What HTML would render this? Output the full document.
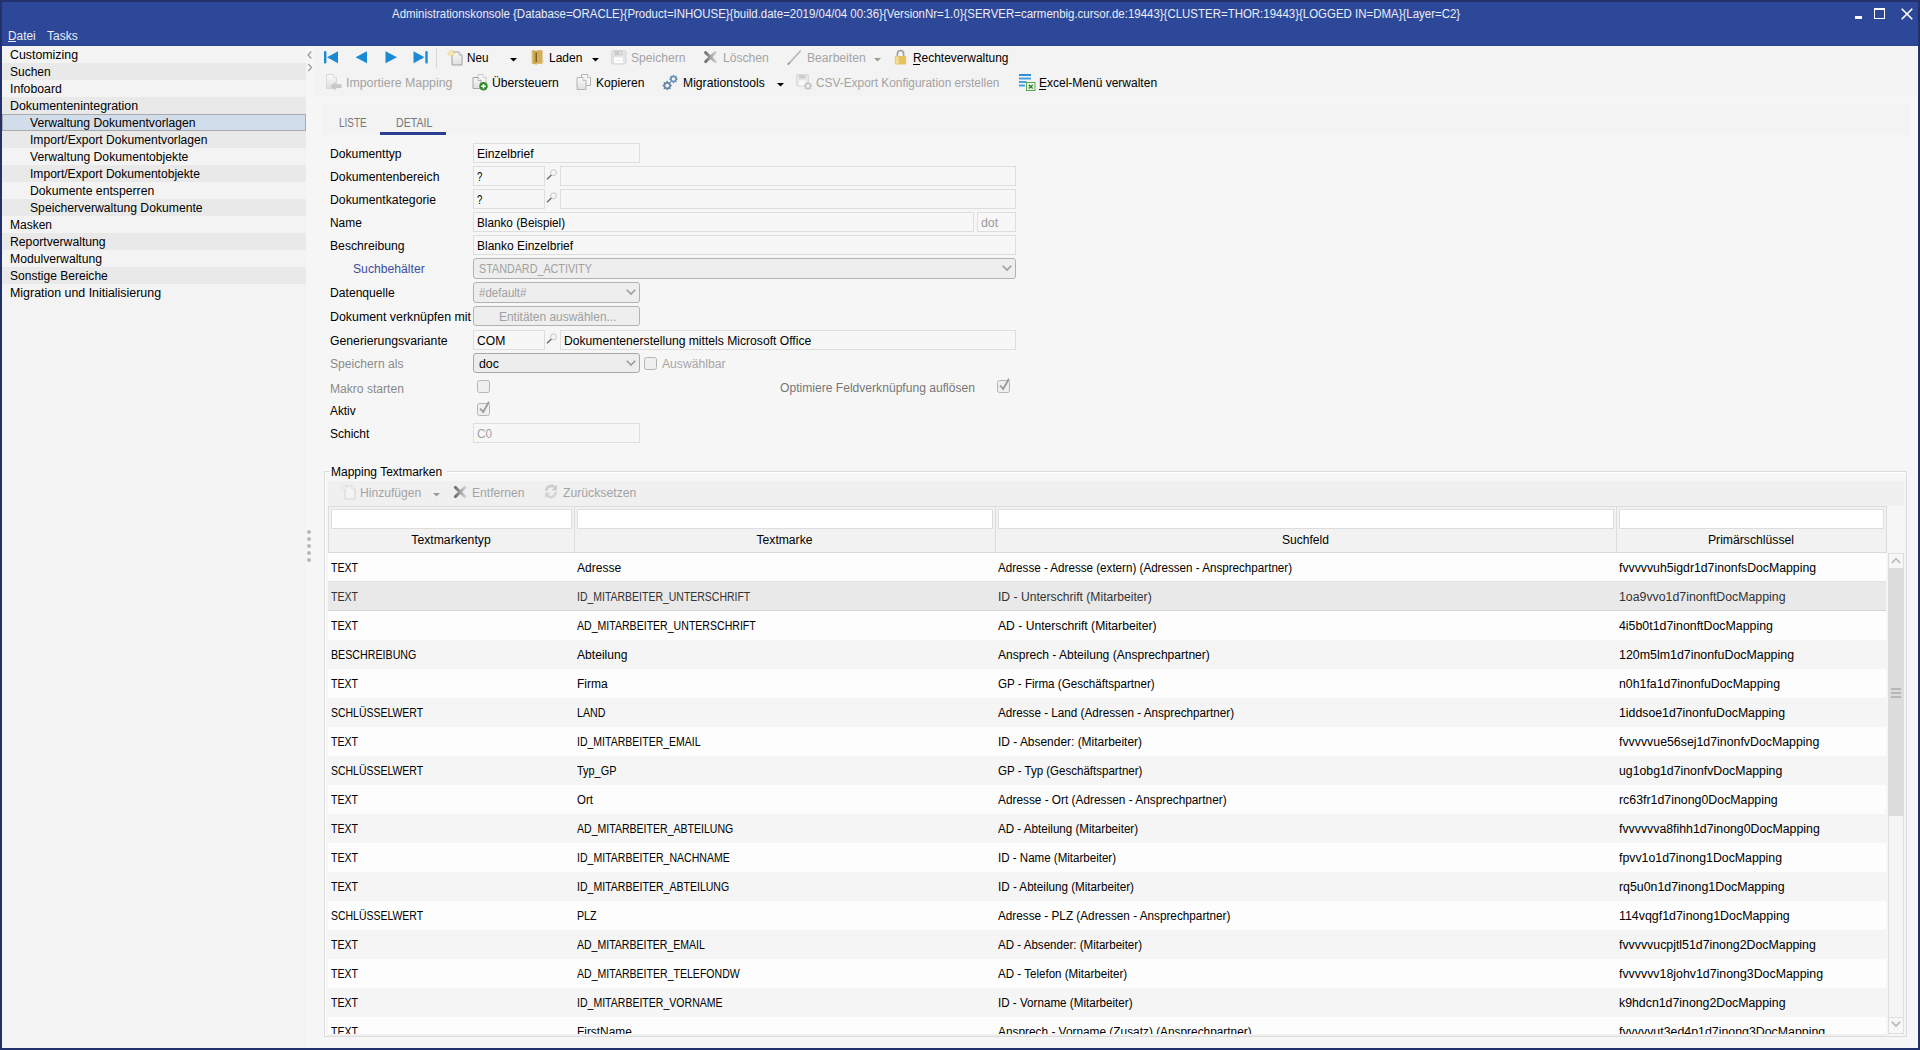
<!DOCTYPE html><html><head><meta charset="utf-8"><title>Administrationskonsole</title><style>
*{margin:0;padding:0;box-sizing:border-box}
html,body{width:1920px;height:1050px;overflow:hidden;background:#23316b}
body{position:relative;font-family:"Liberation Sans",sans-serif;font-size:12px;color:#000}
.a{position:absolute}
.t{position:absolute;white-space:nowrap;font-size:12px;line-height:17px}
.dis{color:#a3a3a3}
svg{position:absolute;overflow:visible}
</style></head><body>
<div class="a" style="left:2px;top:2px;width:1916px;height:44px;background:#2e4899"></div>
<div class="a" style="left:2px;top:45px;width:1916px;height:1px;background:#2a4394"></div>
<div class="t" style="left:392px;top:6px;color:#e9edf7;transform:scaleX(0.955);transform-origin:0 0;">Administrationskonsole {Database=ORACLE}{Product=INHOUSE}{build.date=2019/04/04 00:36}{VersionNr=1.0}{SERVER=carmenbig.cursor.de:19443}{CLUSTER=THOR:19443}{LOGGED IN=DMA}{Layer=C2}</div>
<div class="a" style="left:1855px;top:16px;width:7px;height:3px;background:#fff"></div>
<div class="a" style="left:1874px;top:8px;width:11px;height:11px;border:1.5px solid #fff;border-top-width:2px"></div>
<svg style="left:1901px;top:8px" width="12" height="12"><path d="M0.7 0.7L11.3 11.3M11.3 0.7L0.7 11.3" stroke="#fff" stroke-width="1.6"/></svg>
<div class="t" style="left:8px;top:28px;color:#e9edf7;transform:scaleX(0.987);transform-origin:0 0;">Datei</div>
<div class="a" style="left:8px;top:41px;width:8px;height:1px;background:#e9edf7"></div>
<div class="t" style="left:47px;top:28px;color:#e9edf7;">Tasks</div>
<div class="a" style="left:2px;top:46px;width:1916px;height:1002px;background:#f6f6f6"></div>
<div class="a" style="left:2px;top:46px;width:304px;height:1002px;background:#f3f3f3"></div>
<div class="t" style="left:10px;top:47px;color:#000;transform:scaleX(1.030);transform-origin:0 0;">Customizing</div>
<div class="a" style="left:2px;top:63px;width:304px;height:17px;background:#e9e9e9"></div>
<div class="t" style="left:10px;top:64px;color:#000;">Suchen</div>
<div class="t" style="left:10px;top:81px;color:#000;transform:scaleX(1.021);transform-origin:0 0;">Infoboard</div>
<div class="a" style="left:2px;top:97px;width:304px;height:17px;background:#e9e9e9"></div>
<div class="t" style="left:10px;top:98px;color:#000;transform:scaleX(1.032);transform-origin:0 0;">Dokumentenintegration</div>
<div class="a" style="left:2px;top:114px;width:304px;height:17px;background:#d2ddec;border:1px solid #ababab"></div>
<div class="t" style="left:30px;top:115px;color:#000;transform:scaleX(1.012);transform-origin:0 0;">Verwaltung Dokumentvorlagen</div>
<div class="a" style="left:2px;top:131px;width:304px;height:17px;background:#e9e9e9"></div>
<div class="t" style="left:30px;top:132px;color:#000;transform:scaleX(1.008);transform-origin:0 0;">Import/Export Dokumentvorlagen</div>
<div class="t" style="left:30px;top:149px;color:#000;transform:scaleX(1.014);transform-origin:0 0;">Verwaltung Dokumentobjekte</div>
<div class="a" style="left:2px;top:165px;width:304px;height:17px;background:#e9e9e9"></div>
<div class="t" style="left:30px;top:166px;color:#000;transform:scaleX(1.007);transform-origin:0 0;">Import/Export Dokumentobjekte</div>
<div class="t" style="left:30px;top:183px;color:#000;transform:scaleX(1.018);transform-origin:0 0;">Dokumente entsperren</div>
<div class="a" style="left:2px;top:199px;width:304px;height:17px;background:#e9e9e9"></div>
<div class="t" style="left:30px;top:200px;color:#000;transform:scaleX(1.015);transform-origin:0 0;">Speicherverwaltung Dokumente</div>
<div class="t" style="left:10px;top:217px;color:#000;">Masken</div>
<div class="a" style="left:2px;top:233px;width:304px;height:17px;background:#e9e9e9"></div>
<div class="t" style="left:10px;top:234px;color:#000;transform:scaleX(1.017);transform-origin:0 0;">Reportverwaltung</div>
<div class="t" style="left:10px;top:251px;color:#000;transform:scaleX(1.015);transform-origin:0 0;">Modulverwaltung</div>
<div class="a" style="left:2px;top:267px;width:304px;height:17px;background:#e9e9e9"></div>
<div class="t" style="left:10px;top:268px;color:#000;transform:scaleX(1.004);transform-origin:0 0;">Sonstige Bereiche</div>
<div class="t" style="left:10px;top:285px;color:#000;transform:scaleX(1.034);transform-origin:0 0;">Migration und Initialisierung</div>
<svg style="left:306.5px;top:51px" width="6" height="22"><path d="M4.3 0.5L1 4L4.3 7.5M1.3 13L4.6 16.5L1.3 20" fill="none" stroke="#9a9a9a" stroke-width="1.2"/></svg>
<div class="a" style="left:307px;top:530px;width:4px;height:4px;background:#b7b7b7;border-radius:2px"></div>
<div class="a" style="left:307px;top:537px;width:4px;height:4px;background:#b7b7b7;border-radius:2px"></div>
<div class="a" style="left:307px;top:544px;width:4px;height:4px;background:#b7b7b7;border-radius:2px"></div>
<div class="a" style="left:307px;top:551px;width:4px;height:4px;background:#b7b7b7;border-radius:2px"></div>
<div class="a" style="left:307px;top:558px;width:4px;height:4px;background:#b7b7b7;border-radius:2px"></div>
<div class="a" style="left:314px;top:46px;width:1603px;height:50px;background:#f3f3f3"></div>
<div class="a" style="left:1917px;top:46px;width:1px;height:1001px;background:#fdfdfd"></div>
<svg style="left:324px;top:51px" width="15" height="13" viewBox="0 0 15 13"><rect x="0" y="0" width="2.4" height="12.5" rx="1" fill="#1a8ad4"/><path d="M14 0.3V12.3L3 6.3Z" fill="#1a8ad4"/></svg>
<svg style="left:355px;top:51px" width="13" height="13" viewBox="0 0 13 13"><path d="M12 0.3V12.3L0.5 6.3Z" fill="#1a8ad4"/></svg>
<svg style="left:385px;top:51px" width="13" height="13" viewBox="0 0 13 13"><path d="M0.5 0.3V12.3L12 6.3Z" fill="#1a8ad4"/></svg>
<svg style="left:413px;top:51px" width="15" height="13" viewBox="0 0 15 13"><path d="M0.5 0.3V12.3L11.5 6.3Z" fill="#1a8ad4"/><rect x="12.3" y="0" width="2.4" height="12.5" rx="1" fill="#1a8ad4"/></svg>
<div class="a" style="left:436px;top:48px;width:1px;height:20px;background:#d6d6d6"></div>
<svg style="left:0;top:0" width="0" height="0"><defs><linearGradient id="dg" x1="0" y1="0" x2="0" y2="1"><stop offset="0" stop-color="#fafafa"/><stop offset="1" stop-color="#dedede"/></linearGradient><linearGradient id="xg" x1="0" y1="0" x2="1" y2="0"><stop offset="0" stop-color="#6f6f6f"/><stop offset="1" stop-color="#cfcfcf"/></linearGradient><linearGradient id="fg" x1="0" y1="0" x2="1" y2="0"><stop offset="0" stop-color="#f0d592"/><stop offset="0.4" stop-color="#c9a24c"/><stop offset="1" stop-color="#d8b660"/></linearGradient></defs></svg>
<svg style="left:447px;top:49px" width="17" height="17" viewBox="0 0 17 17"><path d="M5.0 3.0H12.0L15.0 6.0V16.0H5.0Z" fill="url(#dg)" stroke="#a0a0a0" stroke-width="1"/><path d="M12.0 3.0V6.0H15.0" fill="#fff" stroke="#a0a0a0" stroke-width="0.8"/><circle cx="4.3" cy="4.3" r="2.4" fill="#f3dc7a"/><circle cx="4.3" cy="4.3" r="1.3" fill="#fff3c0"/><path d="M4.3 0.3V1.6M4.3 7V8.3M0.3 4.3H1.6M7 4.3H8.3M1.5 1.5L2.4 2.4M6.2 6.2L7.1 7.1M7.1 1.5L6.2 2.4M2.4 6.2L1.5 7.1" stroke="#e6c860" stroke-width="0.9"/></svg>
<div class="t" style="left:467px;top:50px;transform:scaleX(0.975);transform-origin:0 0;">Neu</div>
<svg style="left:510px;top:58px" width="7" height="4" viewBox="0 0 7 4"><path d="M0 0H7L3.5 3.5Z" fill="#000"/></svg>
<svg style="left:531px;top:49px" width="13" height="17" viewBox="0 0 13 17"><path d="M0.5 1L6 1.8V15.8L0.5 14.6Z" fill="url(#fg)"/><path d="M6 1.2H11.5V14.2L11 14.8H6Z" fill="#d3ae58"/><path d="M5.2 3.5V13" stroke="#5a4418" stroke-width="1.1"/><path d="M11.5 9.5H12.5V13.5H11.5" fill="#e8d49a"/></svg>
<div class="t" style="left:549px;top:50px;">Laden</div>
<svg style="left:592px;top:58px" width="7" height="4" viewBox="0 0 7 4"><path d="M0 0H7L3.5 3.5Z" fill="#000"/></svg>
<svg style="left:611px;top:50px" width="16" height="15" viewBox="0 0 16 15"><rect x="0.5" y="0.5" width="14.5" height="13.5" rx="1.8" fill="#e4e4e4" stroke="#d6d6d6"/><rect x="3.5" y="1" width="8" height="4.3" fill="#cbcbcb"/><rect x="8.8" y="1.6" width="1.2" height="2.8" fill="#f0f0f0"/><rect x="3.3" y="7.3" width="8.5" height="5.8" fill="#ffffff"/><path d="M4.5 10.5H10.5" stroke="#e6e6e6" stroke-width="0.8"/></svg>
<div class="t dis" style="left:631px;top:50px;transform:scaleX(1.009);transform-origin:0 0;">Speichern</div>
<svg style="left:703px;top:50px" width="15" height="15" viewBox="0 0 15 15"><path d="M2.6 2.6L12.3 11.6M12.3 2.6L2.6 11.6" stroke="url(#xg)" stroke-width="2.9" stroke-linecap="round"/></svg>
<div class="t dis" style="left:723px;top:50px;transform:scaleX(1.010);transform-origin:0 0;">Löschen</div>
<svg style="left:787px;top:50px" width="15" height="16" viewBox="0 0 15 16"><path d="M1.2 14.2L13.2 1.2" stroke="#b4b4b4" stroke-width="1.6" stroke-linecap="round"/><path d="M1 14.5L2.6 12.6" stroke="#8a8a8a" stroke-width="1.2"/></svg>
<div class="t dis" style="left:807px;top:50px;transform:scaleX(1.011);transform-origin:0 0;">Bearbeiten</div>
<svg style="left:874px;top:58px" width="7" height="4" viewBox="0 0 7 4"><path d="M0 0H7L3.5 3.5Z" fill="#9a9a9a"/></svg>
<svg style="left:894px;top:49px" width="13" height="16" viewBox="0 0 13 16"><path d="M3.4 7.2V4.6A3.1 3.1 0 0 1 9.6 4.6V7.2" fill="none" stroke="#9c9c9c" stroke-width="1.6"/><rect x="0.8" y="7" width="11.4" height="8.4" rx="1.2" fill="#e4c35e"/><rect x="1.6" y="7.6" width="3.2" height="7.2" fill="#f1dc95"/></svg>
<div class="t" style="left:913px;top:50px;transform:scaleX(0.994);transform-origin:0 0;">Rechteverwaltung</div>
<div class="a" style="left:913px;top:64px;width:7px;height:1px;background:#000"></div>
<svg style="left:325px;top:74px" width="17" height="17" viewBox="0 0 17 17"><path d="M1.5 0.5H8.5L11.5 3.5V14.5H1.5Z" fill="url(#dg)" stroke="#d8d8d8" stroke-width="1"/><path d="M8.5 0.5V3.5H11.5" fill="#fff" stroke="#d8d8d8" stroke-width="0.8"/><path d="M16.5 10.3H10.6V7.8L5 12.2L10.6 16.6V14.1H16.5Z" fill="#c8c8c8"/></svg>
<div class="t dis" style="left:346px;top:75px;transform:scaleX(1.030);transform-origin:0 0;">Importiere Mapping</div>
<svg style="left:472px;top:74px" width="17" height="17" viewBox="0 0 17 17"><path d="M6.0 0.5H11.0L14.0 3.5V10.5H6.0Z" fill="#f6f6f6" stroke="#c8c8c8" stroke-width="1"/><path d="M11.0 0.5V3.5H14.0" fill="#fff" stroke="#c8c8c8" stroke-width="0.8"/><path d="M1.0 3.5H6.0L9.0 6.5V14.5H1.0Z" fill="url(#dg)" stroke="#a4a4a4" stroke-width="1"/><path d="M6.0 3.5V6.5H9.0" fill="#fff" stroke="#a4a4a4" stroke-width="0.8"/><circle cx="11.5" cy="12.3" r="4.2" fill="#2f8a26"/><path d="M11.5 10V14.6M9.2 12.3H13.8" stroke="#fff" stroke-width="1.5"/></svg>
<div class="t" style="left:492px;top:75px;transform:scaleX(1.012);transform-origin:0 0;">Übersteuern</div>
<svg style="left:576px;top:74px" width="16" height="17" viewBox="0 0 16 17"><path d="M5.5 0.5H11.5L14.5 3.5V11.5H5.5Z" fill="#f6f6f6" stroke="#b4b4b4" stroke-width="1"/><path d="M11.5 0.5V3.5H14.5" fill="#fff" stroke="#b4b4b4" stroke-width="0.8"/><path d="M1.0 3.5H7.0L10.0 6.5V15.5H1.0Z" fill="url(#dg)" stroke="#b4b4b4" stroke-width="1"/><path d="M7.0 3.5V6.5H10.0" fill="#fff" stroke="#b4b4b4" stroke-width="0.8"/></svg>
<div class="t" style="left:596px;top:75px;transform:scaleX(1.007);transform-origin:0 0;">Kopieren</div>
<svg style="left:662px;top:74px" width="17" height="17" viewBox="0 0 17 17"><path d="M16.10 5.00 L14.56 6.27 L14.75 8.25 L12.77 8.06 L11.50 9.60 L10.23 8.06 L8.25 8.25 L8.44 6.27 L6.90 5.00 L8.44 3.73 L8.25 1.75 L10.23 1.94 L11.50 0.40 L12.77 1.94 L14.75 1.75 L14.56 3.73Z" fill="#6a8fbf"/><circle cx="11.5" cy="5" r="1.75" fill="#f3f3f3"/><path d="M10.20 11.60 L8.53 12.98 L8.74 15.14 L6.58 14.93 L5.20 16.60 L3.82 14.93 L1.66 15.14 L1.87 12.98 L0.20 11.60 L1.87 10.22 L1.66 8.06 L3.82 8.27 L5.20 6.60 L6.58 8.27 L8.74 8.06 L8.53 10.22Z" fill="#6b87a8"/><circle cx="5.2" cy="11.6" r="1.90" fill="#f3f3f3"/></svg>
<div class="t" style="left:683px;top:75px;transform:scaleX(1.013);transform-origin:0 0;">Migrationstools</div>
<svg style="left:777px;top:83px" width="7" height="4" viewBox="0 0 7 4"><path d="M0 0H7L3.5 3.5Z" fill="#000"/></svg>
<svg style="left:796px;top:74px" width="17" height="17" viewBox="0 0 17 17"><rect x="0.5" y="0.5" width="12" height="11.5" rx="1.5" fill="#e6e6e6" stroke="#d8d8d8"/><rect x="3" y="1" width="6.5" height="3.6" fill="#cdcdcd"/><rect x="3" y="6.5" width="7" height="5" fill="#fafafa"/><path d="M16.60 12.00 L15.06 13.27 L15.25 15.25 L13.27 15.06 L12.00 16.60 L10.73 15.06 L8.75 15.25 L8.94 13.27 L7.40 12.00 L8.94 10.73 L8.75 8.75 L10.73 8.94 L12.00 7.40 L13.27 8.94 L15.25 8.75 L15.06 10.73Z" fill="#c7c7c7"/><circle cx="12" cy="12" r="1.75" fill="#f3f3f3"/></svg>
<div class="t dis" style="left:816px;top:75px;transform:scaleX(0.989);transform-origin:0 0;">CSV-Export Konfiguration erstellen</div>
<svg style="left:1019px;top:74px" width="17" height="17" viewBox="0 0 17 17"><rect x="0" y="0" width="12" height="2" fill="#2f8fd6"/><rect x="0" y="3.5" width="12" height="2" fill="#49a0de"/><rect x="0" y="7" width="7.5" height="2" fill="#49a0de"/><rect x="0" y="10.5" width="6" height="2" fill="#49a0de"/><rect x="7.5" y="8.5" width="8.5" height="8" fill="#eaf5e4" stroke="#5aa84e"/><path d="M9.8 10.8L13.7 14.4M13.7 10.8L9.8 14.4" stroke="#2f7d2a" stroke-width="1.3"/></svg>
<div class="t" style="left:1039px;top:75px;">Excel-Menü verwalten</div>
<div class="a" style="left:1039px;top:89px;width:7px;height:1px;background:#000"></div>
<div class="a" style="left:322px;top:104px;width:1588px;height:31px;background:#f3f3f3"></div>
<div class="t" style="left:339px;top:115px;color:#777777;transform:scaleX(0.831);transform-origin:0 0;">LISTE</div>
<div class="t" style="left:396px;top:115px;color:#777777;transform:scaleX(0.885);transform-origin:0 0;">DETAIL</div>
<div class="a" style="left:380px;top:132px;width:66px;height:3px;background:#2a3f94"></div>
<div class="t" style="left:330px;top:146px;color:#000;transform:scaleX(1.013);transform-origin:0 0;">Dokumenttyp</div>
<div class="t" style="left:330px;top:169px;color:#000;transform:scaleX(1.019);transform-origin:0 0;">Dokumentenbereich</div>
<div class="t" style="left:330px;top:192px;color:#000;transform:scaleX(1.019);transform-origin:0 0;">Dokumentkategorie</div>
<div class="t" style="left:330px;top:215px;color:#000;transform:scaleX(0.992);transform-origin:0 0;">Name</div>
<div class="t" style="left:330px;top:238px;color:#000;transform:scaleX(1.015);transform-origin:0 0;">Beschreibung</div>
<div class="t" style="left:353px;top:261px;color:#3a4ea0;transform:scaleX(1.014);transform-origin:0 0;">Suchbehälter</div>
<div class="t" style="left:330px;top:285px;color:#000;transform:scaleX(1.011);transform-origin:0 0;">Datenquelle</div>
<div class="t" style="left:330px;top:309px;color:#000;transform:scaleX(1.031);transform-origin:0 0;">Dokument verknüpfen mit</div>
<div class="t" style="left:330px;top:333px;color:#000;transform:scaleX(1.019);transform-origin:0 0;">Generierungsvariante</div>
<div class="t" style="left:330px;top:356px;color:#8a8a8a;transform:scaleX(1.011);transform-origin:0 0;">Speichern als</div>
<div class="t" style="left:330px;top:381px;color:#8a8a8a;transform:scaleX(1.007);transform-origin:0 0;">Makro starten</div>
<div class="t" style="left:330px;top:403px;color:#000;transform:scaleX(0.987);transform-origin:0 0;">Aktiv</div>
<div class="t" style="left:330px;top:426px;color:#000;">Schicht</div>
<div class="a" style="left:473px;top:143px;width:167px;height:20px;background:#f7f7f7;border:1px solid #dedede"></div>
<div class="t" style="left:477px;top:146px;color:#000;transform:scaleX(1.010);transform-origin:0 0;">Einzelbrief</div>
<div class="a" style="left:473px;top:166px;width:72px;height:20px;background:#f7f7f7;border:1px solid #dedede"></div>
<div class="t" style="left:477px;top:169px;color:#000;transform:scaleX(0.800);transform-origin:0 0;">?</div>
<svg style="left:546px;top:169px" width="11" height="12" viewBox="0 0 11 12"><circle cx="7.5" cy="3.8" r="2.9" fill="none" stroke="#d2d2d2" stroke-width="1.2"/><path d="M5.4 6L1 10.3" stroke="#6a6a6a" stroke-width="1.4"/></svg>
<div class="a" style="left:560px;top:166px;width:456px;height:20px;background:#f7f7f7;border:1px solid #dedede"></div>
<div class="a" style="left:473px;top:189px;width:72px;height:20px;background:#f7f7f7;border:1px solid #dedede"></div>
<div class="t" style="left:477px;top:192px;color:#000;transform:scaleX(0.800);transform-origin:0 0;">?</div>
<svg style="left:546px;top:192px" width="11" height="12" viewBox="0 0 11 12"><circle cx="7.5" cy="3.8" r="2.9" fill="none" stroke="#d2d2d2" stroke-width="1.2"/><path d="M5.4 6L1 10.3" stroke="#6a6a6a" stroke-width="1.4"/></svg>
<div class="a" style="left:560px;top:189px;width:456px;height:20px;background:#f7f7f7;border:1px solid #dedede"></div>
<div class="a" style="left:473px;top:212px;width:501px;height:20px;background:#f7f7f7;border:1px solid #dedede"></div>
<div class="t" style="left:477px;top:215px;color:#000;transform:scaleX(0.978);transform-origin:0 0;">Blanko (Beispiel)</div>
<div class="a" style="left:977px;top:212px;width:39px;height:20px;background:#f7f7f7;border:1px solid #dedede"></div>
<div class="t" style="left:981px;top:215px;color:#9a9a9a;transform:scaleX(1.030);transform-origin:0 0;">dot</div>
<div class="a" style="left:473px;top:235px;width:543px;height:20px;background:#f7f7f7;border:1px solid #dedede"></div>
<div class="t" style="left:477px;top:238px;color:#000;">Blanko Einzelbrief</div>
<div class="a" style="left:473px;top:258px;width:543px;height:21px;background:#eeeeee;border:1px solid #b2b2b2;border-radius:3px"></div>
<div class="t" style="left:479px;top:261px;color:#a0a0a0;transform:scaleX(0.897);transform-origin:0 0;">STANDARD_ACTIVITY</div>
<svg style="left:1002px;top:265px" width="10" height="6" viewBox="0 0 10 6"><path d="M0.8 0.8L5 5L9.2 0.8" fill="none" stroke="#9c9c9c" stroke-width="1.6"/></svg>
<div class="a" style="left:473px;top:282px;width:167px;height:21px;background:#eeeeee;border:1px solid #b2b2b2;border-radius:3px"></div>
<div class="t" style="left:479px;top:285px;color:#a0a0a0;transform:scaleX(0.962);transform-origin:0 0;">#default#</div>
<svg style="left:626px;top:289px" width="10" height="6" viewBox="0 0 10 6"><path d="M0.8 0.8L5 5L9.2 0.8" fill="none" stroke="#9c9c9c" stroke-width="1.6"/></svg>
<div class="a" style="left:473px;top:306px;width:167px;height:20px;background:#eeeeee;border:1px solid #b2b2b2;border-radius:3px"></div>
<div class="t" style="left:499px;top:309px;color:#a0a0a0;transform:scaleX(0.995);transform-origin:0 0;">Entitäten auswählen...</div>
<div class="a" style="left:473px;top:330px;width:72px;height:20px;background:#f7f7f7;border:1px solid #dedede"></div>
<div class="t" style="left:477px;top:333px;color:#000;transform:scaleX(1.011);transform-origin:0 0;">COM</div>
<svg style="left:546px;top:333px" width="11" height="12" viewBox="0 0 11 12"><circle cx="7.5" cy="3.8" r="2.9" fill="none" stroke="#d2d2d2" stroke-width="1.2"/><path d="M5.4 6L1 10.3" stroke="#6a6a6a" stroke-width="1.4"/></svg>
<div class="a" style="left:560px;top:330px;width:456px;height:20px;background:#f7f7f7;border:1px solid #dedede"></div>
<div class="t" style="left:564px;top:333px;color:#000;transform:scaleX(1.011);transform-origin:0 0;">Dokumentenerstellung mittels Microsoft Office</div>
<div class="a" style="left:473px;top:353px;width:167px;height:20px;background:#ededed;border:1px solid #a8a8a8;border-radius:3px"></div>
<div class="t" style="left:479px;top:356px;color:#000;transform:scaleX(1.030);transform-origin:0 0;">doc</div>
<svg style="left:626px;top:360px" width="10" height="6" viewBox="0 0 10 6"><path d="M0.8 0.8L5 5L9.2 0.8" fill="none" stroke="#9c9c9c" stroke-width="1.6"/></svg>
<div class="a" style="left:644px;top:357px;width:13px;height:13px;background:#efefef;border:1px solid #b5b5b5;border-radius:2.5px"></div>
<div class="t" style="left:662px;top:356px;color:#a6a6a6;transform:scaleX(1.012);transform-origin:0 0;">Auswählbar</div>
<div class="a" style="left:477px;top:380px;width:13px;height:13px;background:#efefef;border:1px solid #b5b5b5;border-radius:2.5px"></div>
<div class="t" style="left:780px;top:380px;color:#777777;transform:scaleX(1.008);transform-origin:0 0;">Optimiere Feldverknüpfung auflösen</div>
<div class="a" style="left:997px;top:380px;width:13px;height:13px;background:#efefef;border:1px solid #b5b5b5;border-radius:2.5px"></div>
<svg style="left:999px;top:378px" width="11" height="13" viewBox="0 0 11 13"><path d="M1 7.5L4.2 11L10 0.8" fill="none" stroke="#9a9a9a" stroke-width="1.8"/></svg>
<div class="a" style="left:477px;top:403px;width:13px;height:13px;background:#efefef;border:1px solid #b5b5b5;border-radius:2.5px"></div>
<svg style="left:479px;top:401px" width="11" height="13" viewBox="0 0 11 13"><path d="M1 7.5L4.2 11L10 0.8" fill="none" stroke="#9a9a9a" stroke-width="1.8"/></svg>
<div class="a" style="left:473px;top:423px;width:167px;height:20px;background:#f7f7f7;border:1px solid #dedede"></div>
<div class="t" style="left:477px;top:426px;color:#a0a0a0;transform:scaleX(0.985);transform-origin:0 0;">C0</div>
<div class="a" style="left:324px;top:471px;width:1583px;height:566px;border:1px solid #dcdcdc;box-shadow:inset 1px 1px 0 #fff"></div>
<div class="a" style="left:329px;top:462px;width:118px;height:14px;background:#f6f6f6"></div>
<div class="t" style="left:331px;top:464px;">Mapping Textmarken</div>
<div class="a" style="left:328px;top:481px;width:1576px;height:25px;background:#f0f0f0"></div>
<svg style="left:340px;top:484px" width="17" height="17" viewBox="0 0 17 17"><path d="M5.0 2.0H12.0L15.0 5.0V15.0H5.0Z" fill="#f4f4f4" stroke="#d2d2d2" stroke-width="1"/><path d="M12.0 2.0V5.0H15.0" fill="#fff" stroke="#d2d2d2" stroke-width="0.8"/><circle cx="4" cy="4" r="2.2" fill="#ececec"/><path d="M4 0.5V1.6M4 6.4V7.5M0.5 4H1.6M6.4 4H7.5M1.6 1.6L2.3 2.3M5.7 5.7L6.4 6.4M6.4 1.6L5.7 2.3M2.3 5.7L1.6 6.4" stroke="#dedede" stroke-width="0.8"/></svg>
<div class="t dis" style="left:360px;top:485px;transform:scaleX(1.010);transform-origin:0 0;">Hinzufügen</div>
<svg style="left:433px;top:493px" width="7" height="4" viewBox="0 0 7 4"><path d="M0 0H7L3.5 3.5Z" fill="#9a9a9a"/></svg>
<svg style="left:453px;top:485px" width="15" height="15" viewBox="0 0 15 15"><path d="M2.4 2.4L12 11.6M12 2.4L2.4 11.6" stroke="url(#xg)" stroke-width="2.9" stroke-linecap="round"/></svg>
<div class="t dis" style="left:472px;top:485px;transform:scaleX(1.009);transform-origin:0 0;">Entfernen</div>
<svg style="left:544px;top:484px" width="15" height="15" viewBox="0 0 15 15"><path d="M2.3 7A5 5 0 0 1 11 3.6" fill="none" stroke="#cdcdcd" stroke-width="2.6"/><path d="M13 0.8V6.6H7.2Z" fill="#cdcdcd"/><path d="M11.7 8A5 5 0 0 1 3 11.4" fill="none" stroke="#d4d4d4" stroke-width="2.6"/><path d="M1 14.2V8.4H6.8Z" fill="#d4d4d4"/></svg>
<div class="t dis" style="left:563px;top:485px;transform:scaleX(1.018);transform-origin:0 0;">Zurücksetzen</div>
<div class="a" style="left:328px;top:506px;width:1559px;height:47px;background:#f2f2f2;border:1px solid #dcdcdc;border-bottom:1px solid #d9d9d9"></div>
<div class="a" style="left:331px;top:509px;width:241px;height:20px;background:#fff;border:1px solid #dddddd"></div>
<div class="t" style="left:328px;top:532px;width:246px;text-align:center;transform:scaleX(1.017);transform-origin:center 0;">Textmarkentyp</div>
<div class="a" style="left:574px;top:507px;width:1px;height:46px;background:#dcdcdc"></div>
<div class="a" style="left:577px;top:509px;width:416px;height:20px;background:#fff;border:1px solid #dddddd"></div>
<div class="t" style="left:574px;top:532px;width:421px;text-align:center;transform:scaleX(1.012);transform-origin:center 0;">Textmarke</div>
<div class="a" style="left:995px;top:507px;width:1px;height:46px;background:#dcdcdc"></div>
<div class="a" style="left:998px;top:509px;width:616px;height:20px;background:#fff;border:1px solid #dddddd"></div>
<div class="t" style="left:995px;top:532px;width:621px;text-align:center;transform:scaleX(1.006);transform-origin:center 0;">Suchfeld</div>
<div class="a" style="left:1616px;top:507px;width:1px;height:46px;background:#dcdcdc"></div>
<div class="a" style="left:1619px;top:509px;width:265px;height:20px;background:#fff;border:1px solid #dddddd"></div>
<div class="t" style="left:1616px;top:532px;width:270px;text-align:center;transform:scaleX(1.017);transform-origin:center 0;">Primärschlüssel</div>
<div class="a" style="left:328px;top:553px;width:1559px;height:481px;overflow:hidden">
<div class="a" style="left:0;top:0px;width:1558px;height:29px;background:#fdfdfd"></div>
<div class="t" style="left:3px;top:7px;color:#000;transform:scaleX(0.880);transform-origin:0 0;">TEXT</div>
<div class="t" style="left:249px;top:7px;color:#000;transform:scaleX(1.005);transform-origin:0 0;">Adresse</div>
<div class="t" style="left:670px;top:7px;color:#000;transform:scaleX(0.969);transform-origin:0 0;">Adresse - Adresse (extern) (Adressen - Ansprechpartner)</div>
<div class="t" style="left:1291px;top:7px;color:#000;transform:scaleX(1.022);transform-origin:0 0;">fvvvvvuh5igdr1d7inonfsDocMapping</div>
<div class="a" style="left:0;top:29px;width:1558px;height:29px;background:#e9e9e9"></div>
<div class="a" style="left:0;top:28px;width:1558px;height:1px;background:#e2e2e2"></div>
<div class="a" style="left:0;top:57px;width:1558px;height:1px;background:#d6d6d6"></div>
<div class="t" style="left:3px;top:36px;color:#333;transform:scaleX(0.880);transform-origin:0 0;">TEXT</div>
<div class="t" style="left:249px;top:36px;color:#333;transform:scaleX(0.873);transform-origin:0 0;">ID_MITARBEITER_UNTERSCHRIFT</div>
<div class="t" style="left:670px;top:36px;color:#333;transform:scaleX(1.011);transform-origin:0 0;">ID - Unterschrift (Mitarbeiter)</div>
<div class="t" style="left:1291px;top:36px;color:#333;transform:scaleX(1.027);transform-origin:0 0;">1oa9vvo1d7inonftDocMapping</div>
<div class="a" style="left:0;top:58px;width:1558px;height:29px;background:#fdfdfd"></div>
<div class="t" style="left:3px;top:65px;color:#000;transform:scaleX(0.880);transform-origin:0 0;">TEXT</div>
<div class="t" style="left:249px;top:65px;color:#000;transform:scaleX(0.880);transform-origin:0 0;">AD_MITARBEITER_UNTERSCHRIFT</div>
<div class="t" style="left:670px;top:65px;color:#000;transform:scaleX(1.012);transform-origin:0 0;">AD - Unterschrift (Mitarbeiter)</div>
<div class="t" style="left:1291px;top:65px;color:#000;transform:scaleX(1.030);transform-origin:0 0;">4i5b0t1d7inonftDocMapping</div>
<div class="a" style="left:0;top:87px;width:1558px;height:29px;background:#f5f5f5"></div>
<div class="t" style="left:3px;top:94px;color:#000;transform:scaleX(0.889);transform-origin:0 0;">BESCHREIBUNG</div>
<div class="t" style="left:249px;top:94px;color:#000;transform:scaleX(1.008);transform-origin:0 0;">Abteilung</div>
<div class="t" style="left:670px;top:94px;color:#000;transform:scaleX(1.005);transform-origin:0 0;">Ansprech - Abteilung (Ansprechpartner)</div>
<div class="t" style="left:1291px;top:94px;color:#000;transform:scaleX(1.033);transform-origin:0 0;">120m5lm1d7inonfuDocMapping</div>
<div class="a" style="left:0;top:116px;width:1558px;height:29px;background:#fdfdfd"></div>
<div class="t" style="left:3px;top:123px;color:#000;transform:scaleX(0.880);transform-origin:0 0;">TEXT</div>
<div class="t" style="left:249px;top:123px;color:#000;">Firma</div>
<div class="t" style="left:670px;top:123px;color:#000;transform:scaleX(0.968);transform-origin:0 0;">GP - Firma (Geschäftspartner)</div>
<div class="t" style="left:1291px;top:123px;color:#000;transform:scaleX(1.027);transform-origin:0 0;">n0h1fa1d7inonfuDocMapping</div>
<div class="a" style="left:0;top:145px;width:1558px;height:29px;background:#f5f5f5"></div>
<div class="t" style="left:3px;top:152px;color:#000;transform:scaleX(0.872);transform-origin:0 0;">SCHLÜSSELWERT</div>
<div class="t" style="left:249px;top:152px;color:#000;transform:scaleX(0.889);transform-origin:0 0;">LAND</div>
<div class="t" style="left:670px;top:152px;color:#000;transform:scaleX(0.975);transform-origin:0 0;">Adresse - Land (Adressen - Ansprechpartner)</div>
<div class="t" style="left:1291px;top:152px;color:#000;transform:scaleX(1.024);transform-origin:0 0;">1iddsoe1d7inonfuDocMapping</div>
<div class="a" style="left:0;top:174px;width:1558px;height:29px;background:#fdfdfd"></div>
<div class="t" style="left:3px;top:181px;color:#000;transform:scaleX(0.880);transform-origin:0 0;">TEXT</div>
<div class="t" style="left:249px;top:181px;color:#000;transform:scaleX(0.876);transform-origin:0 0;">ID_MITARBEITER_EMAIL</div>
<div class="t" style="left:670px;top:181px;color:#000;transform:scaleX(0.995);transform-origin:0 0;">ID - Absender: (Mitarbeiter)</div>
<div class="t" style="left:1291px;top:181px;color:#000;transform:scaleX(1.028);transform-origin:0 0;">fvvvvvue56sej1d7inonfvDocMapping</div>
<div class="a" style="left:0;top:203px;width:1558px;height:29px;background:#f5f5f5"></div>
<div class="t" style="left:3px;top:210px;color:#000;transform:scaleX(0.872);transform-origin:0 0;">SCHLÜSSELWERT</div>
<div class="t" style="left:249px;top:210px;color:#000;transform:scaleX(0.910);transform-origin:0 0;">Typ_GP</div>
<div class="t" style="left:670px;top:210px;color:#000;transform:scaleX(0.961);transform-origin:0 0;">GP - Typ (Geschäftspartner)</div>
<div class="t" style="left:1291px;top:210px;color:#000;transform:scaleX(1.024);transform-origin:0 0;">ug1obg1d7inonfvDocMapping</div>
<div class="a" style="left:0;top:232px;width:1558px;height:29px;background:#fdfdfd"></div>
<div class="t" style="left:3px;top:239px;color:#000;transform:scaleX(0.880);transform-origin:0 0;">TEXT</div>
<div class="t" style="left:249px;top:239px;color:#000;transform:scaleX(0.951);transform-origin:0 0;">Ort</div>
<div class="t" style="left:670px;top:239px;color:#000;transform:scaleX(0.985);transform-origin:0 0;">Adresse - Ort (Adressen - Ansprechpartner)</div>
<div class="t" style="left:1291px;top:239px;color:#000;transform:scaleX(1.030);transform-origin:0 0;">rc63fr1d7inong0DocMapping</div>
<div class="a" style="left:0;top:261px;width:1558px;height:29px;background:#f5f5f5"></div>
<div class="t" style="left:3px;top:268px;color:#000;transform:scaleX(0.880);transform-origin:0 0;">TEXT</div>
<div class="t" style="left:249px;top:268px;color:#000;transform:scaleX(0.879);transform-origin:0 0;">AD_MITARBEITER_ABTEILUNG</div>
<div class="t" style="left:670px;top:268px;color:#000;transform:scaleX(0.968);transform-origin:0 0;">AD - Abteilung (Mitarbeiter)</div>
<div class="t" style="left:1291px;top:268px;color:#000;transform:scaleX(1.027);transform-origin:0 0;">fvvvvvva8fihh1d7inong0DocMapping</div>
<div class="a" style="left:0;top:290px;width:1558px;height:29px;background:#fdfdfd"></div>
<div class="t" style="left:3px;top:297px;color:#000;transform:scaleX(0.880);transform-origin:0 0;">TEXT</div>
<div class="t" style="left:249px;top:297px;color:#000;transform:scaleX(0.879);transform-origin:0 0;">ID_MITARBEITER_NACHNAME</div>
<div class="t" style="left:670px;top:297px;color:#000;transform:scaleX(0.962);transform-origin:0 0;">ID - Name (Mitarbeiter)</div>
<div class="t" style="left:1291px;top:297px;color:#000;transform:scaleX(1.027);transform-origin:0 0;">fpvv1o1d7inong1DocMapping</div>
<div class="a" style="left:0;top:319px;width:1558px;height:29px;background:#f5f5f5"></div>
<div class="t" style="left:3px;top:326px;color:#000;transform:scaleX(0.880);transform-origin:0 0;">TEXT</div>
<div class="t" style="left:249px;top:326px;color:#000;transform:scaleX(0.879);transform-origin:0 0;">ID_MITARBEITER_ABTEILUNG</div>
<div class="t" style="left:670px;top:326px;color:#000;transform:scaleX(0.971);transform-origin:0 0;">ID - Abteilung (Mitarbeiter)</div>
<div class="t" style="left:1291px;top:326px;color:#000;transform:scaleX(1.030);transform-origin:0 0;">rq5u0n1d7inong1DocMapping</div>
<div class="a" style="left:0;top:348px;width:1558px;height:29px;background:#fdfdfd"></div>
<div class="t" style="left:3px;top:355px;color:#000;transform:scaleX(0.872);transform-origin:0 0;">SCHLÜSSELWERT</div>
<div class="t" style="left:249px;top:355px;color:#000;transform:scaleX(0.889);transform-origin:0 0;">PLZ</div>
<div class="t" style="left:670px;top:355px;color:#000;transform:scaleX(0.979);transform-origin:0 0;">Adresse - PLZ (Adressen - Ansprechpartner)</div>
<div class="t" style="left:1291px;top:355px;color:#000;transform:scaleX(1.033);transform-origin:0 0;">114vqgf1d7inong1DocMapping</div>
<div class="a" style="left:0;top:377px;width:1558px;height:29px;background:#f5f5f5"></div>
<div class="t" style="left:3px;top:384px;color:#000;transform:scaleX(0.880);transform-origin:0 0;">TEXT</div>
<div class="t" style="left:249px;top:384px;color:#000;transform:scaleX(0.877);transform-origin:0 0;">AD_MITARBEITER_EMAIL</div>
<div class="t" style="left:670px;top:384px;color:#000;transform:scaleX(0.964);transform-origin:0 0;">AD - Absender: (Mitarbeiter)</div>
<div class="t" style="left:1291px;top:384px;color:#000;transform:scaleX(1.028);transform-origin:0 0;">fvvvvvucpjtl51d7inong2DocMapping</div>
<div class="a" style="left:0;top:406px;width:1558px;height:29px;background:#fdfdfd"></div>
<div class="t" style="left:3px;top:413px;color:#000;transform:scaleX(0.880);transform-origin:0 0;">TEXT</div>
<div class="t" style="left:249px;top:413px;color:#000;transform:scaleX(0.879);transform-origin:0 0;">AD_MITARBEITER_TELEFONDW</div>
<div class="t" style="left:670px;top:413px;color:#000;transform:scaleX(0.965);transform-origin:0 0;">AD - Telefon (Mitarbeiter)</div>
<div class="t" style="left:1291px;top:413px;color:#000;transform:scaleX(1.030);transform-origin:0 0;">fvvvvvv18johv1d7inong3DocMapping</div>
<div class="a" style="left:0;top:435px;width:1558px;height:29px;background:#f5f5f5"></div>
<div class="t" style="left:3px;top:442px;color:#000;transform:scaleX(0.880);transform-origin:0 0;">TEXT</div>
<div class="t" style="left:249px;top:442px;color:#000;transform:scaleX(0.878);transform-origin:0 0;">ID_MITARBEITER_VORNAME</div>
<div class="t" style="left:670px;top:442px;color:#000;transform:scaleX(0.970);transform-origin:0 0;">ID - Vorname (Mitarbeiter)</div>
<div class="t" style="left:1291px;top:442px;color:#000;transform:scaleX(1.027);transform-origin:0 0;">k9hdcn1d7inong2DocMapping</div>
<div class="a" style="left:0;top:464px;width:1558px;height:29px;background:#fdfdfd"></div>
<div class="t" style="left:3px;top:471px;color:#000;transform:scaleX(0.880);transform-origin:0 0;">TEXT</div>
<div class="t" style="left:249px;top:471px;color:#000;transform:scaleX(0.990);transform-origin:0 0;">FirstName</div>
<div class="t" style="left:670px;top:471px;color:#000;transform:scaleX(0.988);transform-origin:0 0;">Ansprech - Vorname (Zusatz) (Ansprechpartner)</div>
<div class="t" style="left:1291px;top:471px;color:#000;transform:scaleX(1.030);transform-origin:0 0;">fvvvvvut3ed4p1d7inong3DocMapping</div>
</div>
<div class="a" style="left:328px;top:1034px;width:1559px;height:2px;background:#f0f0f0"></div>
<div class="a" style="left:1888px;top:553px;width:16px;height:481px;background:#f5f5f5;border:1px solid #dedede"></div>
<div class="a" style="left:1888px;top:553px;width:16px;height:16px;background:#f7f7f7;border:1px solid #dedede"></div>
<svg style="left:1891px;top:558px" width="10" height="6" viewBox="0 0 10 6"><path d="M0.8 5L5 0.8L9.2 5" fill="none" stroke="#b5b5b5" stroke-width="1.6"/></svg>
<div class="a" style="left:1889px;top:569px;width:14px;height:247px;background:#dcdcdc"></div>
<div class="a" style="left:1891px;top:688px;width:10px;height:1.5px;background:#b6b6b6"></div>
<div class="a" style="left:1891px;top:692px;width:10px;height:1.5px;background:#b6b6b6"></div>
<div class="a" style="left:1891px;top:696px;width:10px;height:1.5px;background:#b6b6b6"></div>
<div class="a" style="left:1888px;top:1017px;width:16px;height:17px;background:#f7f7f7;border:1px solid #dedede"></div>
<svg style="left:1891px;top:1021px" width="10" height="6" viewBox="0 0 10 6"><path d="M0.8 0.8L5 5L9.2 0.8" fill="none" stroke="#b5b5b5" stroke-width="1.6"/></svg>
</body></html>
